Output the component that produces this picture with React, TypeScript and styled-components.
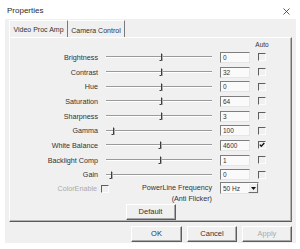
import * as React from 'react';
import styled, { createGlobalStyle } from 'styled-components';

const Global = createGlobalStyle`
  html, body {
    margin: 0;
    padding: 0;
    background: #ffffff;
  }
  body {
    font-family: "Liberation Sans", Arial, sans-serif;
    color: #333;
  }
`;

const Window = styled.div`
  width: 300px;
  height: 249px;
  background: #ffffff;
  box-sizing: border-box;
  overflow: hidden;
`;

const TitleBar = styled.div`
  height: 19px;
  display: flex;
  align-items: flex-start;
  justify-content: space-between;
  padding: 6px 10px 0 7px;
  box-sizing: border-box;
`;

const Title = styled.div`
  font-size: 8px;
  line-height: 10px;
  color: #2a2a2a;
`;

const Close = styled.svg`
  margin-top: 2px;
`;

const Body = styled.div`
  margin: 0 4px 0 5px;
  height: 224px;
  background: #f0f0f0;
  padding: 1px 4px 0 4px;
  box-sizing: border-box;
`;

const TabStrip = styled.div`
  display: flex;
  height: 17px;
`;

const Tab = styled.div<{ $w: number; $active?: boolean }>`
  width: ${p => p.$w}px;
  box-sizing: border-box;
  font-size: 7px;
  line-height: 8px;
  padding-top: ${p => (p.$active ? 5 : 6)}px;
  text-align: center;
  border-top: 1px solid #ffffff;
  border-left: ${p => (p.$active ? '1px solid #ffffff' : 'none')};
  border-right: 1px solid #7a7a7a;
  color: #333;
  white-space: nowrap;
`;

const Panel = styled.div`
  height: 185px;
  box-sizing: border-box;
  border: 1px solid;
  border-color: #ffffff #707070 #5a5a5a #ffffff;
  box-shadow: inset -1px -1px 0 #b4b4b4;
  padding-top: 1px;
`;

const Grid = styled.div`
  display: grid;
  grid-template-columns: 88px 106px 30px 8px;
  column-gap: 8px;
  grid-template-rows: 11px repeat(9, 14.7px);
  align-items: center;
`;

const AutoLabel = styled.div`
  grid-column: 4;
  justify-self: center;
  font-size: 6.5px;
  white-space: nowrap;
  color: #333;
`;

const Label = styled.div<{ $muted?: boolean }>`
  font-size: 7.2px;
  text-align: right;
  white-space: nowrap;
  color: ${p => (p.$muted ? '#ababab' : '#333')};
`;

const Track = styled.div`
  position: relative;
  height: 2px;
  box-sizing: border-box;
  border-top: 1px solid #9a9a9a;
  border-bottom: 1px solid #ffffff;
`;

const ThumbMark = styled.svg`
  position: absolute;
  top: -4px;
`;

const Edit = styled.div<{ $w?: number }>`
  width: ${p => p.$w ?? 30}px;
  height: 11px;
  box-sizing: border-box;
  border: 1px solid;
  border-color: #7e7e7e #e6e6e6 #e6e6e6 #7e7e7e;
  background: #fafafa;
  font-size: 6.5px;
  line-height: 9px;
  padding-left: 2px;
  color: #333;
`;

const Check = styled.div`
  width: 8px;
  height: 8px;
  box-sizing: border-box;
  border-top: 1px solid #5e5e5e;
  border-left: 1px solid #5e5e5e;
  border-right: 1px solid #fcfcfc;
  border-bottom: 1px solid #fcfcfc;
  display: flex;
  align-items: center;
  justify-content: center;
`;

const BottomRow = styled.div`
  display: grid;
  grid-template-columns: 99px 103px 39px;
  align-items: start;
  height: 22px;
`;

const ColorGroup = styled.div`
  display: flex;
  justify-content: flex-end;
  align-items: center;
  gap: 4px;
  height: 11px;
  margin-top: 1px;
`;

const FreqLabel = styled.div`
  font-size: 7.2px;
  line-height: 11px;
  text-align: right;
  white-space: nowrap;
  color: #333;
`;

const Combo = styled.div`
  margin-left: 8px;
  width: 39px;
  height: 12px;
  box-sizing: border-box;
  border: 1px solid;
  border-color: #7e7e7e #e6e6e6 #e6e6e6 #7e7e7e;
  background: #fafafa;
  display: flex;
  align-items: center;
  justify-content: space-between;
  font-size: 6.5px;
  padding-left: 2px;
  color: #333;
`;

const DropButton = styled.div`
  width: 10px;
  height: 10px;
  box-sizing: border-box;
  background: #f0f0f0;
  border: 1px solid;
  border-color: #ffffff #6e6e6e #6e6e6e #ffffff;
  display: flex;
  align-items: center;
  justify-content: center;
`;

const DefaultRow = styled.div`
  display: flex;
  justify-content: center;
`;

const Button = styled.div<{ $w: number; $disabled?: boolean }>`
  width: ${p => p.$w}px;
  height: 16px;
  box-sizing: border-box;
  border: 1px solid;
  border-color: #ffffff #5e5e5e #5e5e5e #ffffff;
  box-shadow: inset -1px -1px 0 #a8a8a8;
  background: #f0f0f0;
  font-size: 7.5px;
  line-height: 14px;
  text-align: center;
  color: ${p => (p.$disabled ? '#ababab' : '#333')};
`;

const ButtonRow = styled.div`
  display: flex;
  justify-content: flex-end;
  gap: 5px;
  margin-top: 4px;
`;

type Row = { label: string; value: string; thumb: number; auto?: boolean };

const rows: Row[] = [
  { label: 'Brightness', value: '0', thumb: 53 },
  { label: 'Contrast', value: '32', thumb: 53 },
  { label: 'Hue', value: '0', thumb: 53 },
  { label: 'Saturation', value: '64', thumb: 53 },
  { label: 'Sharpness', value: '3', thumb: 53 },
  { label: 'Gamma', value: '100', thumb: 5 },
  { label: 'White Balance', value: '4600', thumb: 52, auto: true },
  { label: 'Backlight Comp', value: '1', thumb: 52 },
  { label: 'Gain', value: '0', thumb: 3 },
];

function Slider({ pos }: { pos: number }) {
  return (
    <Track>
      <ThumbMark width="4" height="9" viewBox="0 0 4 9" style={{ left: pos }}>
        <path d="M2.5 0.5 V7.5 H0.5" fill="none" stroke="#3c3c3c" strokeWidth="1" />
        <path d="M3.5 1 V8" fill="none" stroke="#b0b0b0" strokeWidth="1" />
      </ThumbMark>
    </Track>
  );
}

function Box({ checked }: { checked?: boolean }) {
  return (
    <Check>
      {checked && (
        <svg width="6" height="6" viewBox="0 0 6 6">
          <path d="M0.8 2.6 L2.3 4.3 L5.3 1" fill="none" stroke="#111" strokeWidth="1.3" />
        </svg>
      )}
    </Check>
  );
}

export default function App() {
  return (
    <Window>
      <Global />
      <TitleBar>
        <Title>Properties</Title>
        <Close width="7" height="7" viewBox="0 0 7 7">
          <path d="M0.5 0.5 L6.5 6.5 M6.5 0.5 L0.5 6.5" stroke="#333" strokeWidth="0.8" />
        </Close>
      </TitleBar>
      <Body>
        <TabStrip>
          <Tab $w={59} $active>Video Proc Amp</Tab>
          <Tab $w={57}>Camera Control</Tab>
        </TabStrip>
        <Panel>
          <Grid>
            <AutoLabel>Auto</AutoLabel>
            {rows.map(r => (
              <React.Fragment key={r.label}>
                <Label>{r.label}</Label>
                <Slider pos={r.thumb} />
                <Edit>{r.value}</Edit>
                <Box checked={r.auto} />
              </React.Fragment>
            ))}
          </Grid>
          <BottomRow>
            <ColorGroup>
              <Label $muted>ColorEnable</Label>
              <Box />
            </ColorGroup>
            <FreqLabel>
              PowerLine Frequency
              <br />
              (Anti Flicker)
            </FreqLabel>
            <Combo>
              50 Hz
              <DropButton>
                <svg width="5" height="3" viewBox="0 0 5 3">
                  <path d="M0 0 H5 L2.5 3 Z" fill="#111" />
                </svg>
              </DropButton>
            </Combo>
          </BottomRow>
          <DefaultRow>
            <Button $w={50}>Default</Button>
          </DefaultRow>
        </Panel>
        <ButtonRow>
          <Button $w={51}>OK</Button>
          <Button $w={50}>Cancel</Button>
          <Button $w={50} $disabled>Apply</Button>
        </ButtonRow>
      </Body>
    </Window>
  );
}
